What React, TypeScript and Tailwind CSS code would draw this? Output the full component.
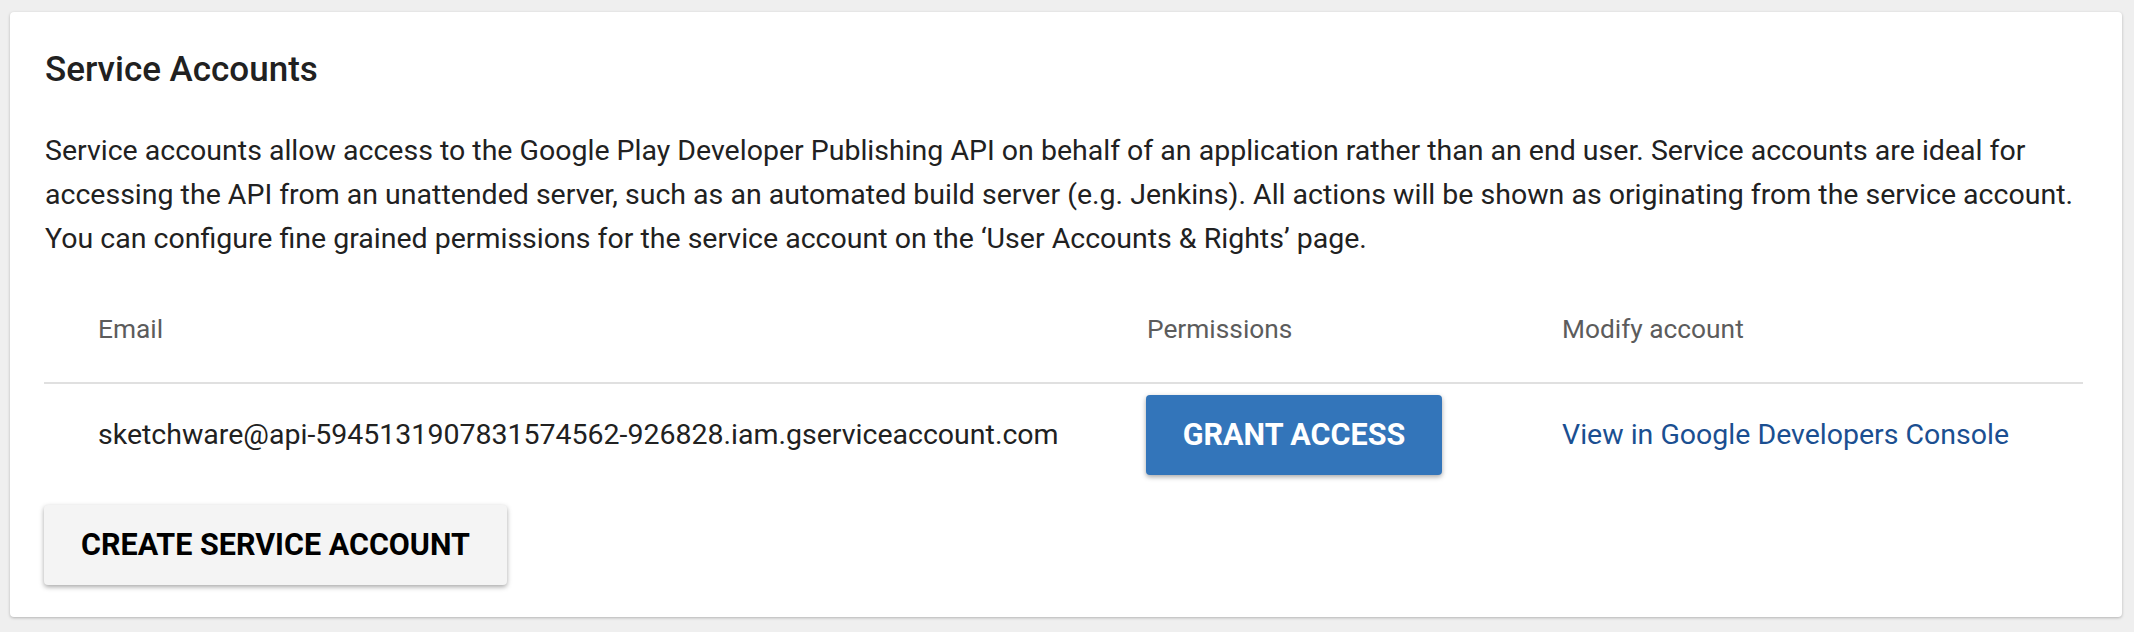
import React from "react";

export default function App() {
  return (
    <div className="min-h-[632px] w-full bg-[#efefef] pt-[12px] pl-[10px] pr-[12px] pb-[14px]" style={{ fontFamily: "Roboto, 'Noto Sans', sans-serif" }}>
      <div className="rounded-[4px] bg-white pt-[37px] pb-[32px] pl-[34px] pr-[39px] shadow-[0_1px_3px_rgba(0,0,0,0.25)]">
        <h2 className="pl-[1px] text-[35px] leading-[42px] font-medium text-[#212121]">Service Accounts</h2>
        <p className="mt-[38px] pl-[1px] text-[28.5px] leading-[44px] text-[#212121]">
          Service accounts allow access to the Google Play Developer Publishing API on behalf of an application rather than an end user. Service accounts are ideal for accessing the API from an unattended server, such as an automated build server (e.g. Jenkins). All actions will be shown as originating from the service account. You can configure fine grained permissions for the service account on the ‘User Accounts &amp; Rights’ page.
        </p>
        <div className="mt-[46px] flex border-b-2 border-[#e0e0e0] pb-[31px] text-[26.3px] leading-[44px] text-[#5c5c5c]">
          <div className="w-[1049px] pl-[54px]">Email</div>
          <div className="w-[415px] pl-[54px]">Permissions</div>
          <div className="flex-1 pl-[54px]">Modify account</div>
        </div>
        <div className="flex h-[102px] items-center text-[28.5px] leading-[44px]">
          <div className="w-[1049px] pl-[54px] text-[#212121]">sketchware@api-5945131907831574562-926828.iam.gserviceaccount.com</div>
          <div className="w-[415px] pl-[53px]">
            <button className="h-[80px] w-[296px] rounded-[4px] bg-[#3375ba] text-[30.5px] font-bold text-white shadow-[0_2px_5px_rgba(0,0,0,0.35)]">GRANT ACCESS</button>
          </div>
          <div className="flex-1 pl-[54px]">
            <a className="text-[#1b4f91]">View in Google Developers Console</a>
          </div>
        </div>
        <button className="mt-[19px] h-[80px] w-[463px] rounded-[4px] bg-[#f4f4f4] text-[30.5px] font-bold text-black shadow-[0_2px_5px_rgba(0,0,0,0.35)]">CREATE SERVICE ACCOUNT</button>
      </div>
    </div>
  );
}
